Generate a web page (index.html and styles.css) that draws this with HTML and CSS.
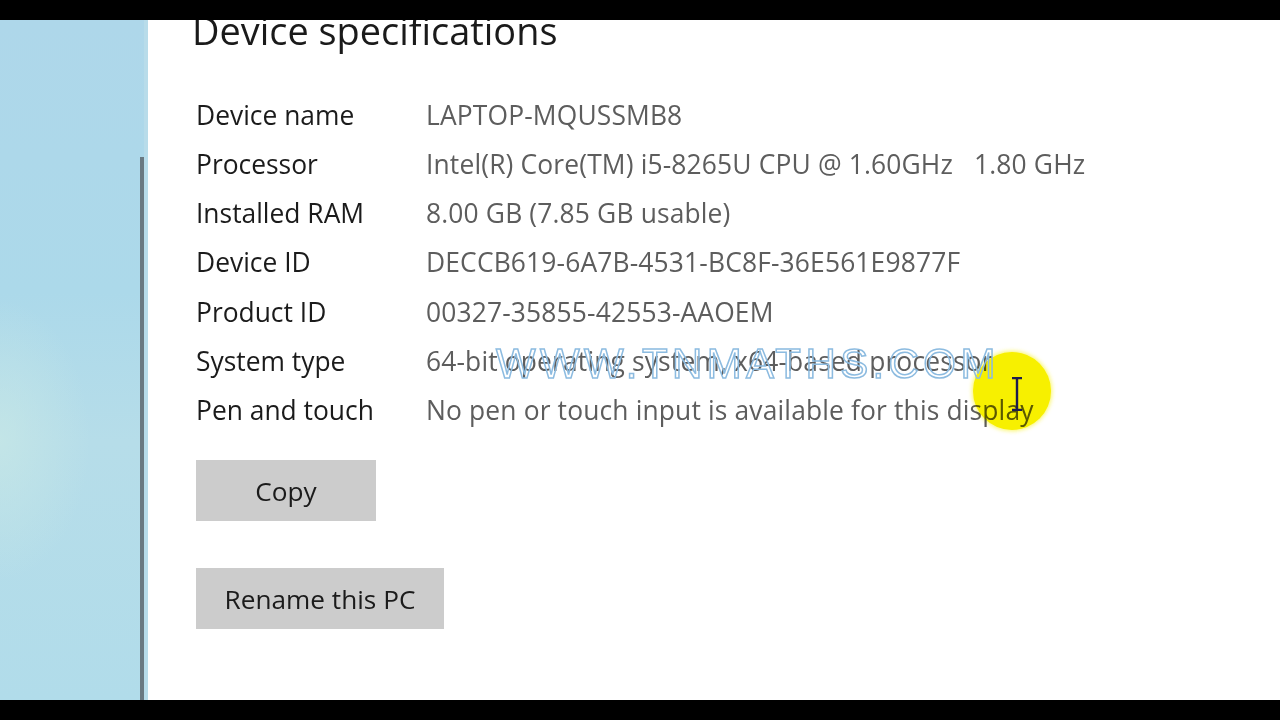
FILE: index.html
```html
<!DOCTYPE html>
<html lang="en">
<head>
<meta charset="utf-8">
<title>Device specifications</title>
<link rel="stylesheet" href="styles.css">
</head>
<body>
<div class="screen">
  <div class="bar"></div>
  <div class="main">
    <aside class="side">
      <div class="side-fill"></div>
      <div class="scroll"></div>
      <div class="side-edge"></div>
    </aside>
    <section class="content">
      <h1 class="title">Device specifications</h1>
      <dl class="specs">
        <dt>Device name</dt><dd>LAPTOP-MQUSSMB8</dd>
        <dt>Processor</dt><dd>Intel(R) Core(TM) i5-8265U CPU @ 1.60GHz &nbsp;&nbsp;1.80 GHz</dd>
        <dt>Installed RAM</dt><dd>8.00 GB (7.85 GB usable)</dd>
        <dt>Device ID</dt><dd>DECCB619-6A7B-4531-BC8F-36E561E9877F</dd>
        <dt>Product ID</dt><dd>00327-35855-42553-AAOEM</dd>
        <dt>System type</dt><dd>64-bit operating system, x64-based processor</dd>
        <dt>Pen and touch</dt><dd>No pen or touch input is available for this display</dd>
      </dl>
      <button class="btn btn-copy">Copy</button>
      <button class="btn btn-rename">Rename this PC</button>
      <div class="highlight"></div>
      <div class="watermark">WWW.TNMATHS.COM</div>
      <svg class="ibeam" width="14" height="34" viewBox="0 0 14 34">
        <path d="M2 1h10M7 1v32M2 33h10" stroke="#1c1c4e" stroke-width="2.4" fill="none"/>
      </svg>
    </section>
  </div>
  <div class="bar"></div>
</div>
</body>
</html>
```

FILE: styles.css
```css
html, body {
  margin: 0;
  padding: 0;
  background: #000;
}
.screen {
  width: 1280px;
  height: 720px;
  display: flex;
  flex-direction: column;
  overflow: hidden;
}
.bar {
  height: 20px;
  background: #000;
  flex: none;
}
.main {
  height: 680px;
  display: flex;
  flex: none;
  overflow: hidden;
}
.side {
  width: 148px;
  display: flex;
  flex: none;
  background: linear-gradient(180deg, #aed7ea 0%, #acd9ea 40%, #b6dde9 62%, #b1dcea 100%);
}
.side-fill {
  width: 140px;
  background: radial-gradient(ellipse 90px 140px at 0px 420px, rgba(200,232,230,0.7), rgba(200,232,230,0) 100%);
}
.scroll {
  width: 4px;
  margin-top: 137px;
  background: #6a7982;
}
.side-edge {
  width: 4px;
  background: #b8dcea;
}
.content {
  position: relative;
  flex: 1;
  background: #fff;
  padding-left: 48px;
  font-family: "Open Sans", "Noto Sans", sans-serif;
}
.title {
  margin: -11px 0 0 -4px;
  font-weight: 400;
  font-size: 37.9px;
  line-height: 42px;
  color: #1a1a1a;
}
.specs {
  display: grid;
  grid-template-columns: 230px auto;
  grid-auto-rows: 49.33px;
  margin: 39.5px 0 0 0;
  font-size: 26.4px;
  line-height: 49px;
}
.specs dt {
  color: #1b1b1b;
  margin: 0;
}
.specs dd {
  color: #5d5d5d;
  margin: 0;
  white-space: pre;
  letter-spacing: 0.15px;
}
.btn {
  display: block;
  border: none;
  background: #cccccc;
  font-family: "Open Sans", "Noto Sans", sans-serif;
  font-size: 26.2px;
  color: #1b1b1b;
  height: 61px;
  padding: 0;
}
.btn-copy {
  width: 180px;
  margin-top: 24.5px;
}
.btn-rename {
  width: 248px;
  margin-top: 47px;
}
.highlight {
  position: absolute;
  left: 825px;
  top: 332px;
  width: 78px;
  height: 78px;
  border-radius: 50%;
  background: #f7f000;
  box-shadow: 0 0 4px 1px rgba(247,240,0,0.6);
  mix-blend-mode: multiply;
}
.watermark {
  position: absolute;
  left: 348px;
  top: 320px;
  font-family: "Liberation Sans", Arial, sans-serif;
  font-size: 42px;
  letter-spacing: 4.4px;
  line-height: 48px;
  color: transparent;
  -webkit-text-stroke: 1.5px #8cbbe0;
}
.ibeam {
  position: absolute;
  left: 862px;
  top: 357px;
}
```
